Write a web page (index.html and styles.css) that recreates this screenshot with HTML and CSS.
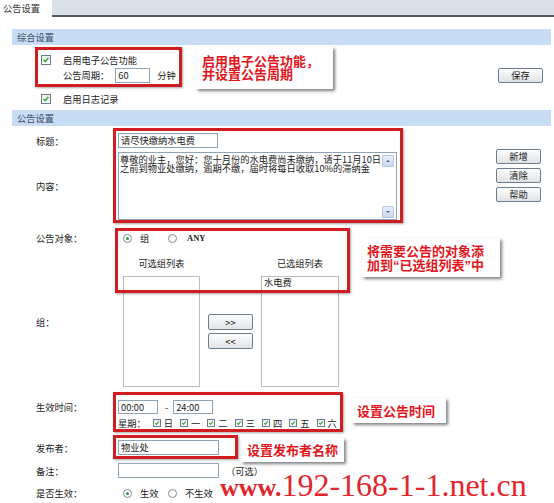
FILE: index.html
```html
<!DOCTYPE html>
<html lang="zh-CN">
<head>
<meta charset="utf-8">
<title>公告设置</title>
<link rel="stylesheet" href="styles.css">
</head>
<body>
<div class="page">
  <div class="tabs">
    <div class="tab">公告设置</div>
    <div class="tab-rest"></div>
  </div>
  <div class="panel">
    <div class="sec-head">综合设置</div>
    <div class="sec1">
      <div class="sec1-left">
        <div class="row r-enable"><span class="cb"><svg viewBox="0 0 10 10"><path d="M2 5l2 2.2L8 2.5" fill="none" stroke="#25a028" stroke-width="1.6"/></svg></span><span class="cb-label">启用电子公告功能</span></div>
        <div class="row r-period"><span>公告周期：</span><span class="inp inp-period">60</span><span class="unit">分钟</span></div>
        <div class="row r-log"><span class="cb"><svg viewBox="0 0 10 10"><path d="M2 5l2 2.2L8 2.5" fill="none" stroke="#25a028" stroke-width="1.6"/></svg></span><span class="cb-label">启用日志记录</span></div>
      </div>
      <button class="btn btn-save">保存</button>
    </div>
    <div class="sec-head">公告设置</div>
    <div class="sec2">
      <div class="form">
        <div class="frow f-title"><div class="lbl">标题：</div><div class="fval"><span class="inp inp-title">请尽快缴纳水电费</span></div></div>
        <div class="frow f-content"><div class="lbl">内容：</div><div class="fval">
          <div class="textarea">
            <div class="ta-text">尊敬的业主，您好：您十月份的水电费尚未缴纳，请于11月10日<br>之前到物业处缴纳，逾期不缴，届时将每日收取10%的滞纳金</div>
            <div class="scroll"><span class="sb-btn"><span class="arr-up"></span></span><span class="sb-btn"><span class="arr-down"></span></span></div>
          </div>
        </div></div>
        <div class="frow f-object"><div class="lbl">公告对象：</div><div class="fval">
          <div class="opts"><span class="opt"><span class="radio on"></span><span class="opt-label">组</span></span><span class="opt"><span class="radio"></span><span class="opt-label any">ANY</span></span></div>
        </div></div>
        <div class="frow f-group"><div class="lbl">组：</div><div class="fval">
          <div class="lists">
            <div class="list-head lh1">可选组列表</div>
            <div class="list-head lh2">已选组列表</div>
            <div class="listbox lb1"></div>
            <div class="move-btns"><button class="btn btn-move">&gt;&gt;</button><button class="btn btn-move">&lt;&lt;</button></div>
            <div class="listbox lb2"><div class="list-item">水电费</div></div>
          </div>
        </div></div>
        <div class="frow f-time"><div class="lbl">生效时间：</div><div class="fval">
          <div class="time-line"><span class="inp inp-time">00:00</span><span class="dash">-</span><span class="inp inp-time">24:00</span></div>
          <div class="week-line"><span class="week-lbl">星期：</span>
            <span class="day"><span class="cb cb-s"><svg viewBox="0 0 10 10"><path d="M2 5l2 2.2L8 2.5" fill="none" stroke="#25a028" stroke-width="1.8"/></svg></span>日</span>
            <span class="day"><span class="cb cb-s"><svg viewBox="0 0 10 10"><path d="M2 5l2 2.2L8 2.5" fill="none" stroke="#25a028" stroke-width="1.8"/></svg></span>一</span>
            <span class="day"><span class="cb cb-s"><svg viewBox="0 0 10 10"><path d="M2 5l2 2.2L8 2.5" fill="none" stroke="#25a028" stroke-width="1.8"/></svg></span>二</span>
            <span class="day"><span class="cb cb-s"><svg viewBox="0 0 10 10"><path d="M2 5l2 2.2L8 2.5" fill="none" stroke="#25a028" stroke-width="1.8"/></svg></span>三</span>
            <span class="day"><span class="cb cb-s"><svg viewBox="0 0 10 10"><path d="M2 5l2 2.2L8 2.5" fill="none" stroke="#25a028" stroke-width="1.8"/></svg></span>四</span>
            <span class="day"><span class="cb cb-s"><svg viewBox="0 0 10 10"><path d="M2 5l2 2.2L8 2.5" fill="none" stroke="#25a028" stroke-width="1.8"/></svg></span>五</span>
            <span class="day"><span class="cb cb-s"><svg viewBox="0 0 10 10"><path d="M2 5l2 2.2L8 2.5" fill="none" stroke="#25a028" stroke-width="1.8"/></svg></span>六</span>
          </div>
        </div></div>
        <div class="frow f-pub"><div class="lbl">发布者：</div><div class="fval"><span class="inp inp-wide">物业处</span></div></div>
        <div class="frow f-note"><div class="lbl">备注：</div><div class="fval"><span class="inp inp-wide"></span><span class="optional">（可选）</span></div></div>
        <div class="frow f-active"><div class="lbl">是否生效：</div><div class="fval">
          <div class="opts"><span class="opt"><span class="radio on"></span><span class="opt-label">生效</span></span><span class="opt"><span class="radio"></span><span class="opt-label">不生效</span></span></div>
        </div></div>
      </div>
      <div class="side">
        <button class="btn">新增</button>
        <button class="btn">清除</button>
        <button class="btn">帮助</button>
      </div>
    </div>
  </div>

  <div class="mark m1"></div>
  <div class="mark m2"></div>
  <div class="mark m3"></div>
  <div class="mark m4"></div>
  <div class="mark m5"></div>

  <div class="callout c1">启用电子公告功能，<br>并设置公告周期</div>
  <div class="callout c2">将需要公告的对象添<br>加到<span class="q">“</span>已选组列表<span class="q">”</span>中</div>
  <div class="callout c3">设置公告时间</div>
  <div class="callout c4">设置发布者名称</div>

  <div class="wm"><span class="wm-www">www.</span><span class="wm-rest">192-168-1-1.net.cn</span></div>
</div>
</body>
</html>
```

FILE: styles.css
```css
* { box-sizing: border-box; }
body {
  margin: 0;
  font-family: "Noto Sans CJK SC", "Noto Sans", sans-serif;
  font-size: 9.25px;
  color: #222;
  background: #fff;
}
.page { position: relative; width: 554px; height: 503px; overflow: hidden; }

.tabs { display: flex; height: 17px; }
.tab { width: 52px; padding-left: 3px; line-height: 16px; background: #fff; color: #333; }
.tab-rest { flex: 1; background: #dbe1e9; border-bottom: 2px solid #505b63; }

.panel { padding: 12px 3px 0 12px; }
.sec-head { height: 16px; line-height: 16px; padding-left: 5px; background: #c8dcf6; color: #3b4c63; }

.sec1 { display: flex; justify-content: space-between; align-items: flex-start; padding: 8px 8px 4px 29px; }
.row { display: flex; align-items: center; }
.r-enable, .r-log { height: 14px; }
.r-period { height: 16px; padding-left: 22px; }
.r-log { margin-top: 9px; }

.cb {
  width: 10px; height: 10px; flex: none;
  border: 1px solid #6b7c8c;
  background: linear-gradient(#e8ebee, #fff);
  display: inline-flex;
}
.cb svg { width: 100%; height: 100%; display: block; }
.cb-s { width: 8px; height: 8px; margin-right: 3px; }
.cb-label { margin-left: 12px; }

.inp {
  display: inline-block; height: 15px; line-height: 13px;
  border: 1px solid #8fa3b6; background: #fff;
  padding: 0 2px; white-space: nowrap;
}
.inp-period { width: 35px; margin-left: 6px; }
.unit { margin-left: 7px; }

.btn {
  width: 45px; height: 15px; padding: 0;
  border: 1px solid #6e7d8c; border-radius: 2px;
  background: linear-gradient(#fdfdfd, #e0e3e6);
  font: inherit; color: #222; line-height: 13px;
}
.btn-save { margin-top: 15px; }

.sec2 { display: flex; align-items: flex-start; }
.form { flex: 1; padding-left: 24px; }
.frow { display: grid; grid-template-columns: 82px auto; align-items: center; }
.lbl { line-height: 14px; color: #222; }
.fval { display: flex; flex-direction: column; align-items: flex-start; }

.f-title { margin-top: 7px; }
.inp-title { width: 100px; }
.f-content { margin-top: 4px; }
.textarea { width: 279px; height: 68px; border: 1px solid #8fa3b6; background: #fff; display: flex; }
.ta-text { flex: 1; padding: 2px 0 0 1px; line-height: 9px; white-space: nowrap; overflow: hidden; }
.scroll { width: 14px; display: flex; flex-direction: column; justify-content: space-between; padding: 2px 2px 1px 0; }
.sb-btn {
  height: 12px; border: 1px solid #b8c7df; border-radius: 1px;
  background: linear-gradient(#eaf0fb, #c9d7ef);
  display: flex; align-items: center; justify-content: center;
}
.arr-up { width: 0; height: 0; border-left: 2px solid transparent; border-right: 2px solid transparent; border-bottom: 2px solid #4d6185; }
.arr-down { width: 0; height: 0; border-left: 2px solid transparent; border-right: 2px solid transparent; border-top: 2px solid #4d6185; }

.f-object { margin-top: 11px; }
.opts { display: flex; align-items: center; height: 14px; padding-left: 5px; }
.opt { display: inline-flex; align-items: center; width: 45px; }
.opt-label { margin-left: 8px; white-space: nowrap; }
.opt-label.any { margin-left: 10px; font-family: "Liberation Serif", serif; font-weight: 700; font-size: 8.5px; }
.radio {
  width: 9px; height: 9px; flex: none; border-radius: 50%;
  border: 1px solid #7c8c9a; background: #fff;
  display: inline-flex; align-items: center; justify-content: center;
}
.radio.on::after { content: ""; width: 3px; height: 3px; border-radius: 50%; background: #2e9e3a; }

.f-group { margin-top: 11px; }
.lists {
  display: grid; margin-left: 5px;
  grid-template-columns: 77px 45px 78px;
  grid-template-rows: 14px 111px;
  column-gap: 8px; row-gap: 6px;
}
.list-head { text-align: center; line-height: 14px; }
.lh1 { grid-column: 1; grid-row: 1; }
.lh2 { grid-column: 3; grid-row: 1; }
.listbox { border: 1px solid #bcbcbc; background: #fff; }
.lb1 { grid-column: 1; grid-row: 2; }
.lb2 { grid-column: 3; grid-row: 2; }
.list-item { padding-left: 2px; line-height: 10px; }
.move-btns { grid-column: 2; grid-row: 2; align-self: center; display: flex; flex-direction: column; gap: 3px; }
.btn-move { height: 16px; }

.f-time { margin-top: 13px; align-items: start; }
.time-line { display: flex; align-items: center; height: 14px; }
.inp-time { width: 40px; height: 14px; line-height: 12px; }
.dash { margin: 0 5px 0 7px; }
.week-line { display: flex; align-items: center; height: 12px; margin-top: 3px; }
.week-lbl { margin-right: 7px; }
.day { display: inline-flex; align-items: center; width: 27.3px; }

.f-pub { margin-top: 11px; }
.inp-wide { width: 101px; }
.f-note { margin-top: 8px; }
.f-note .fval { flex-direction: row; align-items: center; }
.optional { margin-left: 7px; }
.f-active { margin-top: 8px; }

.side { display: flex; flex-direction: column; gap: 4px; padding-top: 23px; margin-right: 10px; }

.mark { position: absolute; border: 3px solid #cf1d22; box-shadow: 1px 1px 2px rgba(0,0,0,.35); }
.m1 { left: 35px; top: 47px; width: 147px; height: 40px; }
.m2 { left: 113px; top: 128px; width: 290px; height: 95px; }
.m3 { left: 115px; top: 228px; width: 235px; height: 65px; }
.m4 { left: 113px; top: 392px; width: 230px; height: 40px; }
.m5 { left: 113px; top: 435px; width: 125px; height: 24px; }

.callout {
  position: absolute; background: #fff;
  box-shadow: 2px 2px 3px rgba(0,0,0,.5);
  color: #e3151c; font-weight: 700; font-size: 13px; line-height: 13px;
  white-space: nowrap;
}
.callout .q { font-family: "Liberation Sans", sans-serif; }
.c1 { left: 196px; top: 47px; width: 137px; height: 42px; padding: 7px 0 0 6px; }
.c2 { left: 362px; top: 238px; width: 138px; height: 39px; padding: 6px 0 0 5px; line-height: 14px; }
.c3 { left: 352px; top: 398px; width: 94px; height: 25px; padding-left: 5px; line-height: 25px; }
.c4 { left: 241px; top: 438px; width: 103px; height: 24px; padding-left: 6px; line-height: 24px; }

.wm {
  position: absolute; left: 220px; top: 468px;
  color: #e3262b; white-space: nowrap;
  font-family: "Liberation Serif", serif; line-height: 34px;
}
.wm-www { font-weight: 700; font-size: 26px; }
.wm-rest { font-size: 32px; }
```
